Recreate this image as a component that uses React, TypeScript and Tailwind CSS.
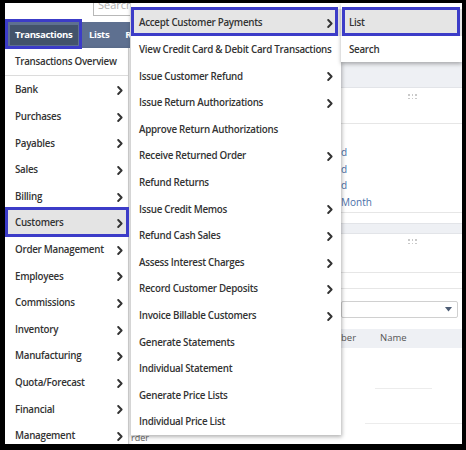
import React from "react";

const Chevron = () => (
  <svg width="6" height="9" viewBox="0 0 6 9" className="shrink-0">
    <polyline points="1.2,1 4.6,4.5 1.2,8" fill="none" stroke="#333" strokeWidth="1.9" strokeLinecap="round" strokeLinejoin="round" />
  </svg>
);

const leftItems: string[] = [
  "Bank",
  "Purchases",
  "Payables",
  "Sales",
  "Billing",
  "Customers",
  "Order Management",
  "Employees",
  "Commissions",
  "Inventory",
  "Manufacturing",
  "Quota/Forecast",
  "Financial",
  "Management",
];

const midItems: [string, boolean][] = [
  ["Accept Customer Payments", true],
  ["View Credit Card & Debit Card Transactions", false],
  ["Issue Customer Refund", true],
  ["Issue Return Authorizations", true],
  ["Approve Return Authorizations", false],
  ["Receive Returned Order", true],
  ["Refund Returns", false],
  ["Issue Credit Memos", true],
  ["Refund Cash Sales", true],
  ["Assess Interest Charges", true],
  ["Record Customer Deposits", true],
  ["Invoice Billable Customers", true],
  ["Generate Statements", false],
  ["Individual Statement", false],
  ["Generate Price Lists", false],
  ["Individual Price List", false],
];

const Dots = () => (
  <div className="grid grid-cols-3 gap-x-[2px] gap-y-[2px] w-max">
    {Array.from({ length: 6 }).map((_, i) => (
      <span key={i} className="block w-[1.5px] h-[1.5px] bg-[#c9c9c9]" />
    ))}
  </div>
);

export default function App() {
  return (
    <div
      className="w-[466px] h-[450px] bg-black pt-[3px] pl-[5px] pr-[4px] pb-[6px]"
      style={{ fontFamily: '"Open Sans", "Noto Sans", sans-serif' }}
    >
      <div className="relative w-full h-full bg-white overflow-hidden">
        {/* header with search */}
        <div className="h-[19px] overflow-hidden">
          <div className="ml-[88px] -mt-[10px] w-[362px] h-[23px] border border-[#b8b8b8] bg-white pl-[4px] text-[11px] leading-[21px] text-[#b0b0b0]">
            Search
          </div>
        </div>

        {/* nav bar */}
        <nav className="h-[26px] bg-[#5e7090] flex items-center text-white text-[9.6px] font-bold tracking-[-0.35px] whitespace-nowrap">
          <div className="ml-[5px] h-[20px] w-[68px] pl-[5px] bg-[#43536b] flex items-center">Transactions</div>
          <div className="ml-[11px]">Lists</div>
          <div className="ml-[16px]">Reports</div>
        </nav>

        {/* page body */}
        <div className="flex">
          <div className="w-[336px] shrink-0" />
          <div className="flex-1 flex flex-col text-[10px]">
            <div className="h-[40px] bg-[#eef0f4] border-b border-[#e2e4e8]" />
            <div className="h-[36px] border-b border-[#e6e6e6] pt-[6px] pl-[67px]">
              <Dots />
            </div>
            <div className="h-[89px] border-b border-[#e6e6e6] pt-[20px] text-[#4a6fa8] leading-[16.7px] font-normal">
              <div>d</div>
              <div>d</div>
              <div>d</div>
              <div>Month</div>
            </div>
            <div className="h-[10px]" />
            <div className="h-[11px] bg-[#eef0f4] border-y border-[#e2e4e8]" />
            <div className="h-[39px] border-b border-[#e6e6e6] pt-[5px] pl-[67px]">
              <Dots />
            </div>
            <div className="h-[16px] border-b border-[#e6e6e6]" />
            <div className="pt-[12px] pr-[4px]">
              <div className="h-[17px] border border-[#d0d0d0] rounded-[2px] flex items-center justify-end pr-[5px]">
                <svg width="7" height="5" viewBox="0 0 7 5">
                  <polygon points="0,0 7,0 3.5,4.5" fill="#4d5d75" />
                </svg>
              </div>
            </div>
            <div className="mt-[11px] h-[19px] bg-[#eef0f4] flex items-center text-[#555] font-normal text-[9.5px]">
              <span>ber</span>
              <span className="ml-[24px]">Name</span>
            </div>
            <div className="mt-[40px] ml-[34px] w-[57px] h-px bg-[#ececec]" />
            <div className="mt-[34px] ml-[24px] h-px bg-[#ececec]" />
          </div>
        </div>

        {/* bottom fragment under middle menu */}
        <div className="absolute left-[126px] top-[429px] text-[9px] leading-[12px] text-[#666]">rder</div>

        {/* left menu */}
        <div className="absolute left-0 top-[45px] w-[124px] h-[420px] bg-white border-r border-[#cfcfcf] text-[#333] text-[9.8px] font-semibold tracking-[-0.28px] whitespace-nowrap shadow-[1px_0_3px_rgba(0,0,0,0.12)]">
          <div className="h-[28px] flex items-center pl-[10px] pt-[1px] border-b border-[#dcdcdc]">Transactions Overview</div>
          {leftItems.map((t) => (
            <div
              key={t}
              className={`h-[26.6px] flex items-center justify-between pl-[10px] pr-[5px] pt-[3px] ${t === "Customers" ? "bg-[#e4e4e4]" : ""}`}
            >
              <span>{t}</span>
              <Chevron />
            </div>
          ))}
        </div>

        {/* middle menu */}
        <div className="absolute left-[125px] top-0 w-[211px] pt-[6px] bg-white border-l border-[#d5d5d5] text-[#333] text-[9.8px] font-semibold tracking-[-0.28px] whitespace-nowrap shadow-[1px_2px_4px_rgba(0,0,0,0.3)]">
          {midItems.map(([t, c], i) => (
            <div
              key={t}
              className={`h-[26.6px] flex items-center justify-between pl-[8px] pr-[8px] pt-[3px] ${i === 0 ? "bg-[#e5e5e5]" : ""}`}
            >
              <span>{t}</span>
              {c ? <Chevron /> : null}
            </div>
          ))}
        </div>

        {/* right menu */}
        <div className="absolute left-[336px] top-0 w-[121px] pt-[6px] bg-white text-[#333] text-[9.8px] font-semibold tracking-[-0.28px] shadow-[0_2px_4px_rgba(0,0,0,0.3)]">
          <div className="h-[26.6px] flex items-center pl-[8px] pt-[2px] bg-[#e5e5e5]">List</div>
          <div className="h-[26.6px] flex items-center pl-[8px] pt-[2px]">Search</div>
        </div>

        {/* annotation outlines */}
        <div className="absolute left-0 top-[16px] w-[77px] h-[30px] border-[3px] border-[#3c3cc8]" />
        <div className="absolute left-0 top-[204px] w-[124px] h-[30px] border-[3px] border-[#3c3cc8]" />
        <div className="absolute left-[126px] top-[4px] w-[207px] h-[29px] border-[3px] border-[#3c3cc8]" />
        <div className="absolute left-[337px] top-[4px] w-[118px] h-[29px] border-[3px] border-[#3c3cc8]" />
      </div>
    </div>
  );
}
